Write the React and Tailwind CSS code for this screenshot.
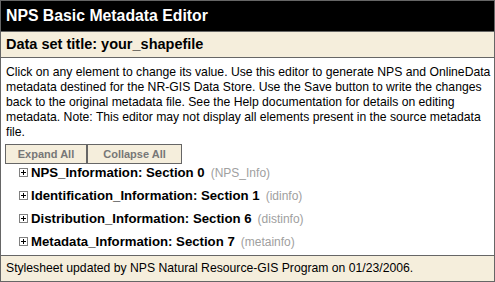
import React from "react";

const sections = [
  { name: "NPS_Information", num: 0, tag: "NPS_Info" },
  { name: "Identification_Information", num: 1, tag: "idinfo" },
  { name: "Distribution_Information", num: 6, tag: "distinfo" },
  { name: "Metadata_Information", num: 7, tag: "metainfo" },
];

const PlusBox = () => (
  <svg width="9" height="9" viewBox="0 0 9 9" className="shrink-0">
    <rect x="0.5" y="0.5" width="8" height="8" fill="#fff" stroke="#808080" />
    <path d="M2 4.5h5M4.5 2v5" stroke="#000" strokeWidth="1" />
  </svg>
);

export default function App() {
  return (
    <div
      className="w-[495px] h-[282px] border border-[#666] bg-white flex flex-col overflow-hidden text-black"
      style={{ fontFamily: '"Liberation Sans", Arial, sans-serif' }}
    >
      {/* header */}
      <div className="h-[31px] shrink-0 bg-black border-b border-[#666] flex items-center px-[5px]">
        <h1 className="text-white font-bold text-[15.8px] leading-none">NPS Basic Metadata Editor</h1>
      </div>
      <div className="h-[26px] shrink-0 bg-[#f5eedc] border-b border-[#666] flex items-center px-[5px]">
        <h2 className="font-bold text-[14.5px] leading-none">Data set title: your_shapefile</h2>
      </div>

      {/* body */}
      <div className="flex-1 px-[5px] pt-[7px]">
        <p className="text-[12.2px] leading-[15px] whitespace-nowrap">
          Click on any element to change its value. Use this editor to generate NPS and OnlineData
          <br />
          metadata destined for the NR-GIS Data Store. Use the Save button to write the changes
          <br />
          back to the original metadata file. See the Help documentation for details on editing
          <br />
          metadata. Note: This editor may not display all elements present in the source metadata
          <br />
          file.
        </p>
        <div className="flex mt-[4px] ml-[-1px]">
          <button className="h-[20px] w-[82px] bg-[#f5eedc] border border-[#666] text-[#777] font-bold text-[11px] leading-none">
            Expand All
          </button>
          <button className="h-[20px] w-[95px] bg-[#f5eedc] border border-[#666] text-[#777] font-bold text-[11px] leading-none">
            Collapse All
          </button>
        </div>
        <ul className="mt-[-3px] ml-[13px] flex flex-col">
          {sections.map((s) => (
            <li key={s.name} className="h-[23px] flex items-center gap-[3px]">
              <PlusBox />
              <span className="font-bold text-[13.2px]">
                {s.name}: Section {s.num}
              </span>
              <span className="text-[12px] text-[#a0a0a0] ml-[3px]">({s.tag})</span>
            </li>
          ))}
        </ul>
      </div>

      {/* footer */}
      <div className="h-[26px] shrink-0 bg-[#f5eedc] border-t border-[#666] flex items-center px-[5px]">
        <span className="text-[12.2px]">Stylesheet updated by NPS Natural Resource-GIS Program on 01/23/2006.</span>
      </div>
    </div>
  );
}
